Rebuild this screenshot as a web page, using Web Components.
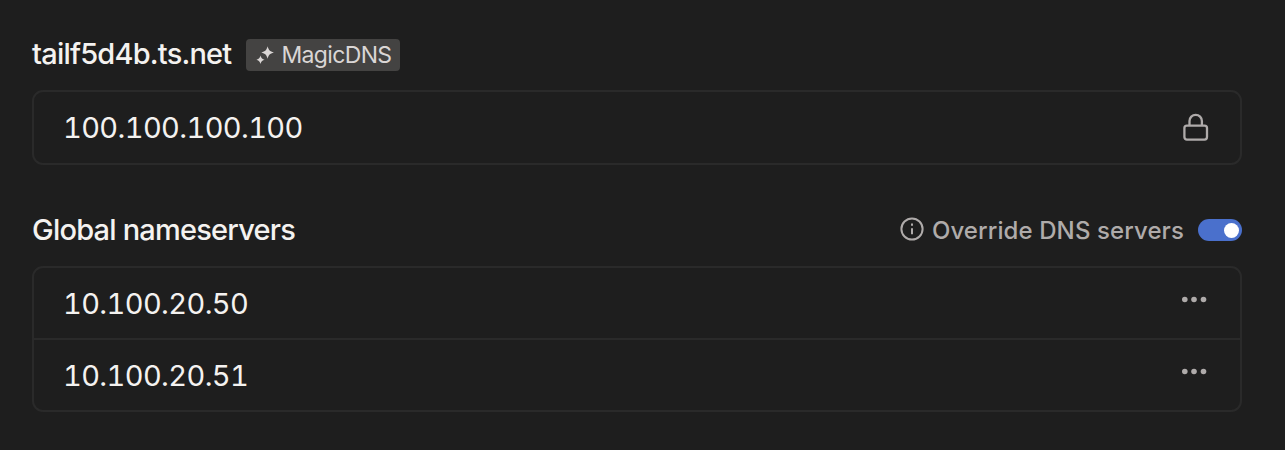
<!DOCTYPE html>
<html lang="en">
<head>
<meta charset="utf-8">
<title>DNS</title>
<style>
  body {
    margin: 0;
    background: #1e1e1e;
    color: #f4f2f0;
    font-family: Inter, sans-serif;
  }
</style>
</head>
<body>
<dns-page>
  <dns-section>
    <section-title slot="title">tailf5d4b.ts.net</section-title>
    <magic-badge slot="title">MagicDNS</magic-badge>
    <name-server action="lock">100.100.100.100</name-server>
  </dns-section>
  <dns-section>
    <section-title slot="title">Global nameservers</section-title>
    <toggle-option slot="action">Override DNS servers</toggle-option>
    <name-server action="menu">10.100.20.50</name-server>
    <name-server action="menu">10.100.20.51</name-server>
  </dns-section>
</dns-page>

<script>
class DnsPage extends HTMLElement {
  constructor() {
    super();
    this.attachShadow({ mode: "open" }).innerHTML = `
      <style>
        :host {
          display: flex;
          flex-direction: column;
          gap: 40px;
          box-sizing: border-box;
          height: 450px;
          padding: 29px 43px 0 32px;
        }
      </style>
      <slot></slot>
    `;
  }
}

class DnsSection extends HTMLElement {
  constructor() {
    super();
    this.attachShadow({ mode: "open" }).innerHTML = `
      <style>
        :host { display: block; }
        header {
          display: flex;
          align-items: center;
          justify-content: space-between;
          height: 50px;
          margin-bottom: 11px;
        }
        .title {
          display: flex;
          align-items: center;
          gap: 15px;
        }
        .list {
          border: 2px solid #2a2a2a;
          border-radius: 11px;
        }
      </style>
      <header>
        <div class="title"><slot name="title"></slot></div>
        <slot name="action"></slot>
      </header>
      <div class="list"><slot></slot></div>
    `;
  }
}

class SectionTitle extends HTMLElement {
  constructor() {
    super();
    this.attachShadow({ mode: "open" }).innerHTML = `
      <style>
        :host {
          display: block;
          font-size: 29px;
          font-weight: 500;
          line-height: 36px;
          letter-spacing: -0.79px;
          white-space: nowrap;
        }
      </style>
      <slot></slot>
    `;
  }
}

class MagicBadge extends HTMLElement {
  constructor() {
    super();
    this.attachShadow({ mode: "open" }).innerHTML = `
      <style>
        :host {
          display: flex;
          align-items: center;
          box-sizing: border-box;
          width: 154px;
          height: 32px;
          margin-top: 2px;
          padding-left: 9px;
          gap: 6px;
          border-radius: 4px;
          background: #444342;
          color: #dad6d5;
          font-size: 23px;
          font-weight: 400;
          letter-spacing: -0.65px;
          white-space: nowrap;
        }
        svg { flex: none; }
      </style>
      <svg width="20" height="20" viewBox="0 0 20 20" fill="currentColor">
        <path d="M12.600 1.200C13.900 5.500 14.600 6.200 18.900 7.500C14.600 8.800 13.900 9.500 12.600 13.800C11.300 9.500 10.600 8.800 6.300 7.500C10.600 6.200 11.300 5.500 12.600 1.200Z"/>
        <path d="M5.500 10.400C6.400 13.200 6.900 13.700 9.700 14.700C6.900 15.700 6.400 16.200 5.500 19C4.600 16.200 4.100 15.700 1.300 14.700C4.100 13.700 4.600 13.200 5.500 10.400Z"/>
      </svg>
      <span><slot></slot></span>
    `;
  }
}

class NameServer extends HTMLElement {
  constructor() {
    super();
    const icons = {
      lock: `
        <svg width="28" height="30" viewBox="0 0 28 30" fill="none" stroke="currentColor" stroke-width="2.3">
          <rect x="2.400" y="12.600" width="22.600" height="14" rx="2.500"/>
          <path d="M7.500 12.600V8a6.200 6.200 0 0 1 12.400 0V12.600"/>
        </svg>`,
      menu: `
        <svg class="menu" width="28" height="8" viewBox="0 0 28 8" fill="currentColor">
          <circle cx="2.800" cy="3.500" r="2.800"/>
          <circle cx="12" cy="3.500" r="2.800"/>
          <circle cx="21.500" cy="3.500" r="2.800"/>
        </svg>`
    };

    this.attachShadow({ mode: "open" }).innerHTML = `
      <style>
        :host {
          display: flex;
          align-items: center;
          justify-content: space-between;
          height: 71px;
          padding: 0 30px 0 29px;
          font-size: 29px;
          letter-spacing: -0.62px;
          font-feature-settings: "tnum";
        }
        :host([action="menu"]) { height: 70px; }
        :host(:not(:first-of-type)) { border-top: 2px solid #2a2a2a; }
        svg { color: #afabaa; }
        .menu { margin-bottom: 7px; }
      </style>
      <span><slot></slot></span>
      ${icons[this.getAttribute("action")]}
    `;
  }
}

class ToggleOption extends HTMLElement {
  constructor() {
    super();
    this.attachShadow({ mode: "open" }).innerHTML = `
      <style>
        :host {
          display: flex;
          align-items: center;
          color: #afabaa;
          font-size: 24px;
          font-weight: 500;
          letter-spacing: 0.1px;
          white-space: nowrap;
        }
        svg { margin: 0 8px 2px 0; }
        .switch {
          display: flex;
          align-items: center;
          justify-content: flex-end;
          box-sizing: border-box;
          width: 44px;
          height: 22px;
          margin-left: 14px;
          padding-right: 3px;
          border-radius: 11px;
          background: #4a70cc;
        }
        .knob {
          width: 15px;
          height: 15px;
          border-radius: 50%;
          background: #fff;
        }
      </style>
      <svg width="24" height="24" viewBox="0 0 24 24" fill="none" stroke="currentColor" stroke-width="2">
        <circle cx="12" cy="12" r="10.600"/>
        <path d="M12 11.200v6M12 6.600v2.200"/>
      </svg>
      <span><slot></slot></span>
      <div class="switch"><div class="knob"></div></div>
    `;
  }
}

customElements.define("dns-page", DnsPage);
customElements.define("dns-section", DnsSection);
customElements.define("section-title", SectionTitle);
customElements.define("magic-badge", MagicBadge);
customElements.define("name-server", NameServer);
customElements.define("toggle-option", ToggleOption);
</script>
</body>
</html>
